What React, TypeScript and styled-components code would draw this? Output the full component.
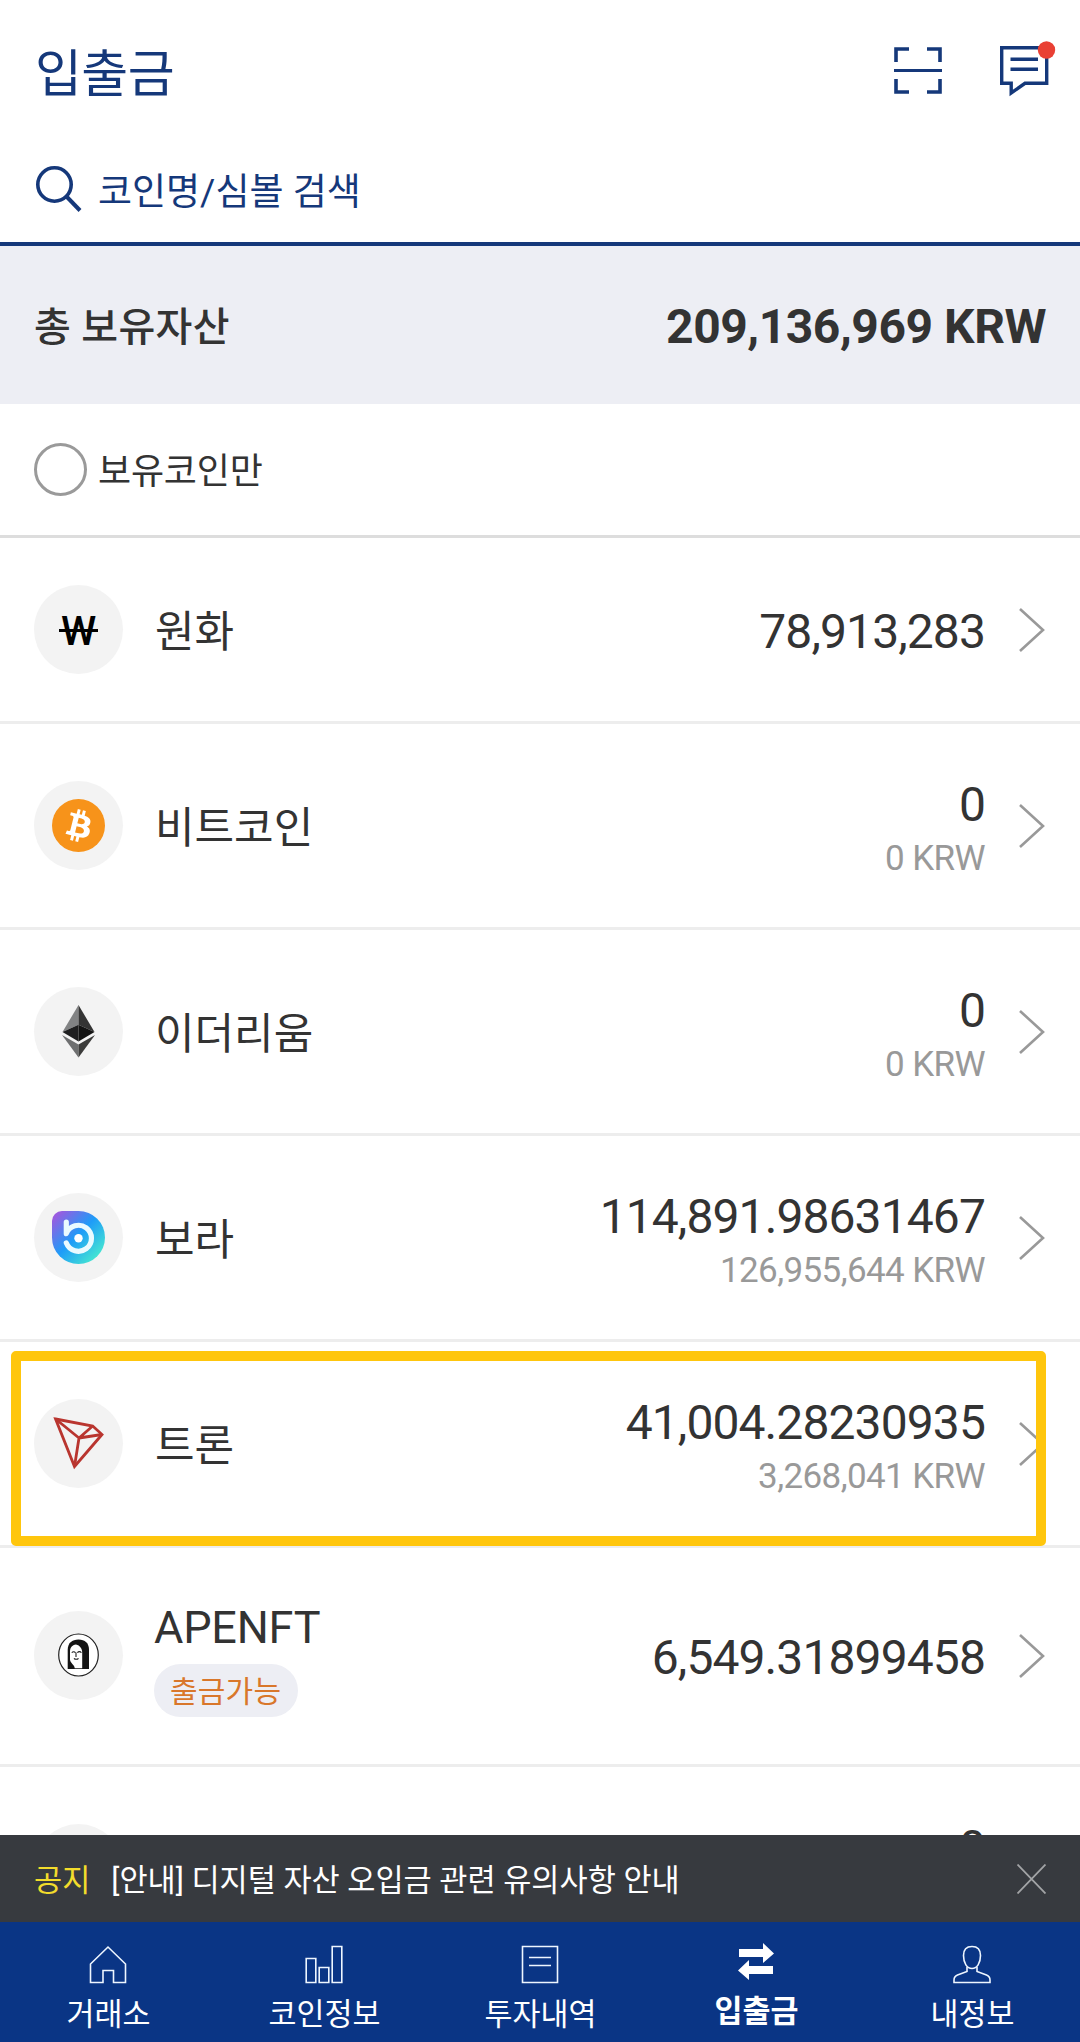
import React from 'react';
import styled, { createGlobalStyle, css } from 'styled-components';

const NAVY = '#0a3585';
const INK = '#15387a';

const GlobalStyle = createGlobalStyle`
  * { box-sizing: border-box; }
  body { margin: 0; background: #fff; }
`;

const Screen = styled.div`
  width: 1080px;
  height: 2042px;
  display: flex;
  flex-direction: column;
  overflow: hidden;
  background: #fff;
  color: #333;
  font-family: Roboto, 'Noto Sans CJK KR', sans-serif;
`;

const Header = styled.header`
  flex: none;
  height: 142px;
  padding: 35px 24px 0 35px;
  display: flex;
  justify-content: space-between;
  align-items: flex-start;
`;

const Title = styled.h1`
  margin: 3px 0 0;
  color: ${INK};
  font-size: 51px;
  font-weight: 400;
  line-height: 74px;
  letter-spacing: -0.6px;
`;

const HeaderActions = styled.div`
  display: flex;
  align-items: flex-end;
  gap: 58px;
`;

const SearchBar = styled.div`
  flex: none;
  height: 104px;
  padding: 0 36px;
  display: flex;
  align-items: center;
  gap: 16px;
  border-bottom: 4px solid ${INK};

  svg {
    margin-bottom: 6px;
  }
`;

const SearchHint = styled.span`
  padding-top: 1px;
  color: ${INK};
  font-size: 37px;
  line-height: 52px;
`;

const TotalBar = styled.section`
  flex: none;
  height: 158px;
  padding: 4px 34px 0;
  display: flex;
  align-items: center;
  justify-content: space-between;
  background: #edeef4;
`;

const TotalLabel = styled.span`
  padding-top: 2px;
  font-size: 40px;
  font-weight: 500;
  line-height: 58px;
  letter-spacing: 0.3px;
`;

const TotalValue = styled.strong`
  font-size: 48px;
  font-weight: 700;
  line-height: 58px;
  letter-spacing: -0.45px;
`;

const FilterBar = styled.label`
  flex: none;
  height: 134px;
  padding: 0 34px;
  display: flex;
  align-items: center;
  gap: 11px;
  border-bottom: 3px solid #ddd;
`;

const Radio = styled.span`
  width: 53px;
  height: 53px;
  border: 3px solid #9a9a9a;
  border-radius: 50%;
`;

const FilterText = styled.span`
  padding-top: 5px;
  font-size: 36px;
  line-height: 52px;
  letter-spacing: -0.2px;
`;

const List = styled.main`
  flex: 1;
  min-height: 0;
  overflow: hidden;
`;

const Row = styled.article<{ $height: number }>`
  position: relative;
  height: ${p => p.$height}px;
  padding: 0 34px;
  display: flex;
  align-items: center;
  border-bottom: 3px solid #ededed;
`;

const CoinBadge = styled.div<{ $raised: boolean }>`
  flex: none;
  width: 89px;
  height: 89px;
  margin-bottom: ${p => (p.$raised ? 2 : 0)}px;
  display: grid;
  place-items: center;
  border-radius: 50%;
  background: #f3f3f3;
`;

const WonMark = styled.span`
  position: relative;
  padding-top: 4px;
  color: #000;
  font-size: 40px;
  font-weight: 500;
  line-height: 46px;

  &::after {
    content: '';
    position: absolute;
    left: -2px;
    right: -2px;
    top: 24px;
    height: 3px;
    background: #000;
  }
`;

const CoinInfo = styled.div<{ $tagged: boolean }>`
  flex: 1;
  margin-left: 31px;
  padding-top: ${p => (p.$tagged ? 1 : 4)}px;
  display: flex;
  flex-direction: column;
  align-items: flex-start;
`;

const CoinName = styled.span<{ $latin: boolean }>`
  padding-left: ${p => (p.$latin ? 0 : 1)}px;
  font-size: ${p => (p.$latin ? 45 : 43)}px;
  line-height: 62px;
  letter-spacing: ${p => (p.$latin ? -0.2 : 0)}px;
`;

const Tag = styled.span`
  height: 53px;
  margin-top: 5px;
  padding: 0 17px 0 16px;
  border-radius: 27px;
  background: #edeef4;
  color: #d9772b;
  font-size: 30px;
  line-height: 56px;
  letter-spacing: 0.2px;
`;

const Amounts = styled.div<{ $single: boolean }>`
  padding-top: ${p => (p.$single ? 4 : 5)}px;
  display: flex;
  flex-direction: column;
  align-items: flex-end;
`;

const Amount = styled.span`
  font-size: 48px;
  line-height: 58px;
  letter-spacing: -0.9px;
`;

const Converted = styled.span`
  margin: 2px 0 -2px;
  color: #999;
  font-size: 35px;
  line-height: 46px;
  letter-spacing: -0.6px;
`;

const ChevronSlot = styled.div`
  display: flex;
  margin: 0 1px 0 34px;
`;

const Highlight = styled.div`
  position: absolute;
  left: 11px;
  top: 9px;
  width: 1035px;
  height: 195px;
  border: 10px solid #ffc60d;
  border-radius: 5px;
`;

const Notice = styled.aside`
  flex: none;
  height: 87px;
  padding: 0 34px;
  display: flex;
  align-items: center;
  background: #373a3f;
  color: #fff;
  font-size: 30.6px;
  line-height: 44px;
`;

const NoticeLabel = styled.span`
  padding-top: 4px;
  margin-right: 21px;
  color: #f2dc2c;
`;

const NoticeText = styled.span`
  flex: 1;
  padding-top: 4px;
`;

const TabBar = styled.nav`
  flex: none;
  height: 120px;
  display: grid;
  grid-template-columns: repeat(5, 1fr);
  background: ${NAVY};
`;

const Tab = styled.div<{ $active?: boolean }>`
  display: flex;
  flex-direction: column;
  align-items: center;
  padding-top: 23px;
  color: #fff;
  font-size: 30.4px;
  line-height: 44px;
  ${p =>
    p.$active &&
    css`
      padding-top: 20px;
      font-weight: 700;
    `}
`;

const TabLabel = styled.span`
  margin: 9px 0 0 1px;
`;

const ScanIcon = () => (
  <svg width="48" height="52" viewBox="0 0 48 52" fill="none" stroke={INK} strokeWidth="3.6">
    <path d="M2 17V4h13M33 4h13v13M46 34v13H33M15 47H2V34" />
    <path d="M0 25.5h48" strokeWidth="3.2" />
  </svg>
);

const ChatIcon = () => (
  <svg width="56" height="62" viewBox="0 0 56 62" fill="none" stroke={INK} strokeWidth="3.4">
    <path d="M1.7 12.7h45v35.6H25L11.2 58V48.3H1.7z" />
    <path d="M10.5 24.3H38M10.5 34.3H38" />
    <circle cx="46.5" cy="15" r="8.7" fill="#e94034" stroke="none" />
  </svg>
);

const SearchIcon = () => (
  <svg width="46" height="46" viewBox="0 0 46 46" fill="none" stroke={INK} strokeWidth="3.6">
    <circle cx="18.5" cy="18.5" r="16.7" />
    <path d="M30.5 30.5L44 44.5" strokeWidth="4" />
  </svg>
);

const Chevron = () => (
  <svg width="26" height="44" viewBox="0 0 26 44" fill="none" stroke="#999" strokeWidth="2.6">
    <path d="M1 1L24 22L1 43" />
  </svg>
);

const BitcoinIcon = () => (
  <svg width="53" height="53" viewBox="0 0 32 32">
    <circle cx="16" cy="16" r="16" fill="#f7931a" />
    <path
      fill="#fff"
      d="M23.189 14.02c.314-2.096-1.283-3.223-3.465-3.975l.708-2.84-1.728-.43-.69 2.765c-.454-.114-.92-.22-1.385-.326l.695-2.783L15.596 6l-.708 2.839c-.376-.086-.746-.17-1.104-.26l.002-.009-2.384-.595-.46 1.846s1.283.294 1.256.312c.7.175.826.638.805 1.006l-.806 3.235c.048.012.11.03.18.057l-.183-.045-1.13 4.532c-.086.212-.303.531-.793.41.018.025-1.256-.313-1.256-.313l-.858 1.978 2.25.561c.418.105.828.215 1.231.318l-.715 2.872 1.727.43.708-2.84c.472.127.93.245 1.378.357l-.706 2.828 1.728.43.715-2.866c2.948.558 5.164.333 6.097-2.333.752-2.146-.037-3.385-1.588-4.192 1.13-.26 1.98-1.003 2.207-2.538zm-3.95 5.538c-.533 2.147-4.148.986-5.32.695l.95-3.805c1.172.293 4.929.872 4.37 3.11zm.535-5.569c-.487 1.953-3.495.96-4.47.717l.86-3.45c.975.243 4.118.696 3.61 2.733z"
    />
  </svg>
);

const EthereumIcon = () => (
  <svg width="33" height="53" viewBox="0 0 33 53">
    <path d="M16.5 0L.5 27l16-7.3z" fill="#828384" />
    <path d="M16.5 0l16 27-16-7.3z" fill="#343434" />
    <path d="M16.5 19.7L.5 27l16 9.5z" fill="#1f1f20" />
    <path d="M16.5 19.7l16 7.3-16 9.5z" fill="#131313" />
    <path d="M0 30l16.5 9.5v13z" fill="#6e6f70" />
    <path d="M33 30l-16.5 9.5v13z" fill="#3c3c3b" />
  </svg>
);

const BoraIcon = () => (
  <svg width="53" height="53" viewBox="0 0 53 53" fill="none">
    <defs>
      <linearGradient id="bora" x1="4" y1="4" x2="46" y2="46" gradientUnits="userSpaceOnUse">
        <stop offset="0" stopColor="#9a5be0" />
        <stop offset="0.5" stopColor="#1e9cf8" />
        <stop offset="1" stopColor="#45e6d2" />
      </linearGradient>
    </defs>
    <path d="M10 0h16.5a26.5 26.5 0 1 1-26.5 26.5V10a10 10 0 0 1 10-10z" fill="url(#bora)" />
    <path
      d="M14.3 11V22.7A13 13 0 1 1 14.3 31.9"
      stroke="#eafaff"
      strokeWidth="5.2"
      strokeLinecap="round"
      strokeLinejoin="round"
    />
    <circle cx="26.5" cy="27.2" r="4.2" fill="#fff" />
  </svg>
);

const TronIcon = () => (
  <svg width="53" height="53" viewBox="0 0 53 53" fill="none" stroke="#b9352f" strokeWidth="2.8">
    <path d="M3.6 2L40.7 9L50 17.5L22.5 49.5z" />
    <path d="M3.6 2L27 21L22.5 49.5M27 21L40.7 9M27 21L50 17.5" />
  </svg>
);

const ApenftIcon = () => (
  <svg width="42" height="44" viewBox="0 0 42 44" fill="none">
    <ellipse cx="20.5" cy="22" rx="19.8" ry="21" fill="#fff" stroke="#222" strokeWidth="1.2" />
    <path d="M9.7 36V17C9.7 10 14 6.5 20.5 6.5S31 10 31 17v19z" fill="#141414" />
    <path d="M12 27V18c0-3 2-6 6-6.5 4 1 6.2 4 6.2 8v15.8h-7.5c0-3.5-3.5-4-4.7-8.3z" fill="#fff" />
    <path
      d="M13.8 19.8c1-1.4 2.8-1.4 3.6 0M19.4 19.8c1-1.6 3-1.6 4 0M18 19.5v4.5M16 25.3c1 1.3 3.5 1.3 4.5 0"
      stroke="#222"
      strokeWidth="1.1"
    />
  </svg>
);

const CloseIcon = () => (
  <svg width="29" height="30" viewBox="0 0 29 30" stroke="#a2a4a6" strokeWidth="1.8">
    <path d="M0.5 0.5l28 29M28.5 0.5l-28 29" />
  </svg>
);

const HomeIcon = () => (
  <svg width="38" height="39" viewBox="0 0 38 39" fill="none" stroke="#eef6ff" strokeWidth="1.6">
    <path d="M1.5 37.5V19L19 2l17.5 17v18.5h-12v-12h-10.5v12z" />
  </svg>
);

const BarsIcon = () => (
  <svg width="38" height="39" viewBox="0 0 38 39" fill="none" stroke="#eef6ff" strokeWidth="1.6">
    <path d="M1.2 13.5h9.6v24H1.2zM14.2 22.5h9.6v15h-9.6zM27.2 1.5h9.6v36h-9.6z" />
  </svg>
);

const DocIcon = () => (
  <svg width="38" height="39" viewBox="0 0 38 39" fill="none" stroke="#eef6ff" strokeWidth="1.6">
    <path d="M1.5 1.5h35v36h-35zM8 12.5h22M8 20.5h22" />
  </svg>
);

const TransferIcon = () => (
  <svg width="38" height="39" viewBox="0 0 38 39" fill="#fff">
    <path d="M2 7h24V1l11 10.5L26 21v-6H2zM36 24H12V18L1 28.5 12 38v-6h24z" />
  </svg>
);

const PersonIcon = () => (
  <svg width="38" height="39" viewBox="0 0 38 39" fill="none" stroke="#eef6ff" strokeWidth="1.6">
    <path d="M19 1.5c-5.5 0-8.5 3.5-8.5 9 0 7.5 3.5 13 8.5 13s8.500-5.500 8.500-13c0-5.500-3-9-8.500-9z" />
    <path d="M14 22v4.500L4.500 30C2 31 1 32.500 1 35v2.500h36V35c0-2.500-1-4-3.500-5L24 26.500V22" />
  </svg>
);

type Coin = {
  name: string;
  icon?: React.ReactNode;
  amount: string;
  krw?: string;
  tag?: string;
  height: number;
  marked?: boolean;
};

const coins: Coin[] = [
  { name: '원화', icon: <WonMark>W</WonMark>, amount: '78,913,283', height: 186 },
  { name: '비트코인', icon: <BitcoinIcon />, amount: '0', krw: '0 KRW', height: 206 },
  { name: '이더리움', icon: <EthereumIcon />, amount: '0', krw: '0 KRW', height: 206 },
  { name: '보라', icon: <BoraIcon />, amount: '114,891.98631467', krw: '126,955,644 KRW', height: 206 },
  { name: '트론', icon: <TronIcon />, amount: '41,004.28230935', krw: '3,268,041 KRW', height: 206, marked: true },
  { name: 'APENFT', icon: <ApenftIcon />, amount: '6,549.31899458', tag: '출금가능', height: 219 },
  { name: '', amount: '0', krw: '0 KRW', height: 206 },
];

const tabs = [
  { label: '거래소', icon: <HomeIcon /> },
  { label: '코인정보', icon: <BarsIcon /> },
  { label: '투자내역', icon: <DocIcon /> },
  { label: '입출금', icon: <TransferIcon />, active: true },
  { label: '내정보', icon: <PersonIcon /> },
];

const CoinRow = ({ coin }: { coin: Coin }) => (
  <Row $height={coin.height}>
    <CoinBadge $raised={!!coin.tag}>{coin.icon}</CoinBadge>
    <CoinInfo $tagged={!!coin.tag}>
      <CoinName $latin={!!coin.tag}>{coin.name}</CoinName>
      {coin.tag && <Tag>{coin.tag}</Tag>}
    </CoinInfo>
    <Amounts $single={!coin.krw}>
      <Amount>{coin.amount}</Amount>
      {coin.krw && <Converted>{coin.krw}</Converted>}
    </Amounts>
    <ChevronSlot>
      <Chevron />
    </ChevronSlot>
    {coin.marked && <Highlight />}
  </Row>
);

export default function App() {
  return (
    <Screen>
      <GlobalStyle />
      <Header>
        <Title>입출금</Title>
        <HeaderActions>
          <ScanIcon />
          <ChatIcon />
        </HeaderActions>
      </Header>
      <SearchBar>
        <SearchIcon />
        <SearchHint>코인명/심볼 검색</SearchHint>
      </SearchBar>
      <TotalBar>
        <TotalLabel>총 보유자산</TotalLabel>
        <TotalValue>209,136,969 KRW</TotalValue>
      </TotalBar>
      <FilterBar>
        <Radio />
        <FilterText>보유코인만</FilterText>
      </FilterBar>
      <List>
        {coins.map((coin, i) => (
          <CoinRow key={i} coin={coin} />
        ))}
      </List>
      <Notice>
        <NoticeLabel>공지</NoticeLabel>
        <NoticeText>[안내] 디지털 자산 오입금 관련 유의사항 안내</NoticeText>
        <CloseIcon />
      </Notice>
      <TabBar>
        {tabs.map(tab => (
          <Tab key={tab.label} $active={tab.active}>
            {tab.icon}
            <TabLabel>{tab.label}</TabLabel>
          </Tab>
        ))}
      </TabBar>
    </Screen>
  );
}
